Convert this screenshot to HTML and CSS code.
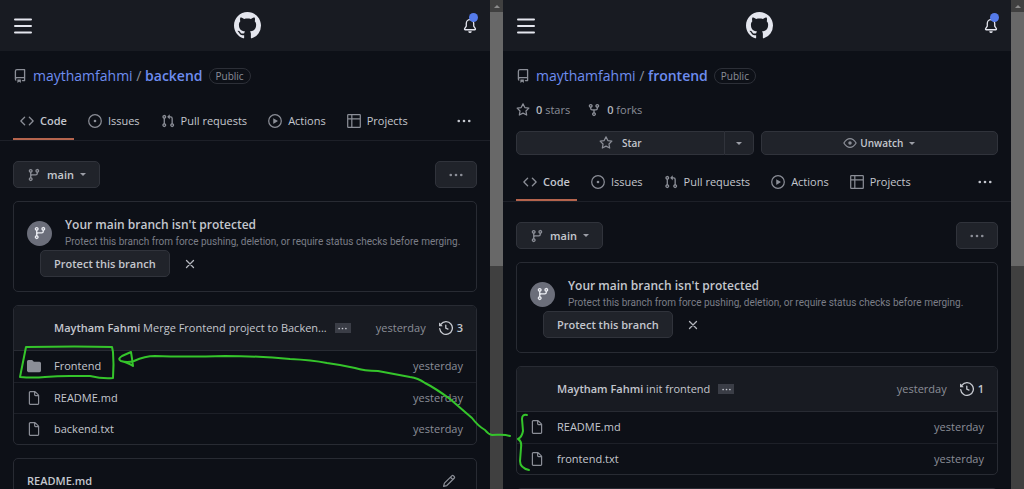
FILE: index.html
```
<!DOCTYPE html>
<html lang="en">
<head>
<meta charset="utf-8">
<meta name="viewport" content="width=device-width, initial-scale=1">
<title>maythamfahmi repositories</title>
<link rel="stylesheet" href="styles.css">
</head>
<body>
<svg class="sprite" aria-hidden="true">
  <symbol id="menu" viewBox="0 0 18 16"><path d="M1 1.5h16M1 8h16M1 14.5h16" fill="none" stroke="currentColor" stroke-width="2" stroke-linecap="round"/></symbol>
  <symbol id="github" viewBox="0 0 16 16"><path d="M8 0C3.58 0 0 3.58 0 8c0 3.54 2.29 6.53 5.47 7.59.4.07.55-.17.55-.38 0-.19-.01-.82-.01-1.49-2.01.37-2.53-.49-2.69-.94-.09-.23-.48-.94-.82-1.13-.28-.15-.68-.52-.01-.53.63-.01 1.08.58 1.23.82.72 1.21 1.87.87 2.33.66.07-.52.28-.87.51-1.07-1.78-.2-3.64-.89-3.64-3.95 0-.87.31-1.59.82-2.15-.08-.2-.36-1.02.08-2.12 0 0 .67-.21 2.2.82.64-.18 1.32-.27 2-.27.68 0 1.36.09 2 .27 1.53-1.04 2.2-.82 2.2-.82.44 1.1.16 1.92.08 2.12.51.56.82 1.27.82 2.15 0 3.07-1.87 3.75-3.65 3.95.29.25.54.73.54 1.48 0 1.07-.01 1.93-.01 2.2 0 .21.15.46.55.38A8.013 8.013 0 0016 8c0-4.42-3.58-8-8-8z"/></symbol>
  <symbol id="bell" viewBox="0 0 16 16"><path d="M8 16a2 2 0 001.985-1.75c.017-.137-.097-.25-.235-.25h-3.5c-.138 0-.252.113-.235.25A2 2 0 008 16z"/><path fill="none" stroke="currentColor" stroke-width="1.5" d="M3.75 5a4.25 4.25 0 018.5 0v3c0 .2.06.4.17.55l1.7 2.5a.76.76 0 01-.64 1.2H2.52a.76.76 0 01-.64-1.2l1.7-2.5A1 1 0 003.750 8z"/></symbol>
  <symbol id="repo" viewBox="0 0 16 16"><path fill-rule="evenodd" d="M2 2.500A2.500 2.500 0 014.500 0h8.750a.75.75 0 01.75.75v12.500a.75.75 0 01-.75.75h-2.500a.75.75 0 110-1.500h1.750v-2h-8a1 1 0 00-.714 1.700.75.75 0 01-1.072 1.050A2.495 2.495 0 012 11.500v-9zm10.500-1V9h-8c-.356 0-.694.074-1 .208V2.500a1 1 0 011-1h8zM5 12.250v3.250a.25.25 0 00.4.2l1.450-1.087a.25.25 0 01.3 0L8.600 15.700a.25.25 0 00.4-.2v-3.250a.25.25 0 00-.25-.25h-3.500a.25.25 0 00-.25.25z"/></symbol>
  <symbol id="code" viewBox="0 0 16 16"><path d="M4.720 3.220a.75.75 0 011.060 1.060L2.060 8l3.720 3.720a.75.75 0 11-1.060 1.060L.47 8.530a.75.75 0 010-1.060l4.250-4.250zm6.560 0a.75.75 0 10-1.060 1.060L13.940 8l-3.720 3.720a.75.75 0 101.060 1.060l4.250-4.250a.75.75 0 000-1.060l-4.250-4.250z"/></symbol>
  <symbol id="issue" viewBox="0 0 16 16"><circle cx="8" cy="8" r="7.2" fill="none" stroke="currentColor" stroke-width="1.400"/><circle cx="8" cy="8" r="1.500"/></symbol>
  <symbol id="pull" viewBox="0 0 16 16"><path fill-rule="evenodd" d="M7.177 3.073L9.573.677A.25.25 0 0110 .854v4.792a.25.25 0 01-.427.177L7.177 3.427a.25.25 0 010-.354zM3.750 2.500a.75.75 0 100 1.500.75.75 0 000-1.500zm-2.250.75a2.250 2.250 0 113 2.122v5.256a2.251 2.251 0 11-1.500 0V5.372A2.250 2.250 0 011.500 3.250zM11 2.500h-1V4h1a1 1 0 011 1v5.628a2.251 2.251 0 101.500 0V5A2.500 2.500 0 0011 2.500zm1 10.250a.75.75 0 111.500 0 .75.75 0 01-1.500 0zM3.750 12a.75.75 0 100 1.500.75.75 0 000-1.500z"/></symbol>
  <symbol id="play" viewBox="0 0 16 16"><circle cx="8" cy="8" r="7.2" fill="none" stroke="currentColor" stroke-width="1.400"/><path d="M6 5.200v5.600c0 .2.2.3.4.2l4.600-2.800c.2-.1.2-.3 0-.4L6.400 5c-.2-.1-.4 0-.4.2z"/></symbol>
  <symbol id="project" viewBox="0 0 16 16"><path d="M1.500.8h13q.7 0 .7.7v13q0 .7-.7.7h-13q-.7 0-.7-.7v-13q0-.7.7-.7zM5.500 1v14M1 5.500h14" fill="none" stroke="currentColor" stroke-width="1.400"/></symbol>
  <symbol id="dots" viewBox="0 0 16 16"><circle cx="2" cy="8" r="1.500"/><circle cx="8" cy="8" r="1.500"/><circle cx="14" cy="8" r="1.500"/></symbol>
  <symbol id="branch" viewBox="0 0 16 16"><path fill-rule="evenodd" d="M11.750 2.500a.75.75 0 100 1.500.75.75 0 000-1.500zm-2.250.75a2.250 2.250 0 113 2.122V6A2.500 2.500 0 0110 8.500H6a1 1 0 00-1 1v1.128a2.251 2.251 0 11-1.500 0V5.372a2.250 2.250 0 111.500 0v1.836A2.492 2.492 0 016 7h4a1 1 0 001-1v-.628A2.250 2.250 0 019.500 3.250zM4.250 12a.75.75 0 100 1.500.75.75 0 000-1.500zM3.500 3.250a.75.75 0 111.500 0 .75.75 0 01-1.500 0z"/></symbol>
  <symbol id="close" viewBox="0 0 16 16"><path d="M4 4l8 8M12 4l-8 8" fill="none" stroke="currentColor" stroke-width="1.500" stroke-linecap="round"/></symbol>
  <symbol id="history" viewBox="0 0 16 16"><path d="M1.643 3.143L.427 1.927A.25.25 0 000 2.104V5.750c0 .138.112.25.25.25h3.646a.25.25 0 00.177-.427L2.715 4.215a6.500 6.500 0 11-1.180 4.458.75.75 0 10-1.493.154 8.001 8.001 0 101.600-5.684zM7.750 4a.75.75 0 01.75.75v2.992l2.028.812a.75.75 0 01-.557 1.392l-2.500-1A.75.75 0 017 8.250v-3.500A.75.75 0 017.750 4z"/></symbol>
  <symbol id="file" viewBox="0 0 16 16"><path d="M3.750.75h5.100q.4 0 .7.3l3.400 3.400q.3.300.3.700v9.100q0 1-1 1h-8.500q-1 0-1-1V1.750q0-1 1-1zM8.750 1v3.250q0 1 1 1H13" fill="none" stroke="currentColor" stroke-width="1.400"/></symbol>
  <symbol id="folder" viewBox="0 0 16 16"><path d="M1.750 1A1.750 1.750 0 000 2.750v10.500C0 14.216.784 15 1.750 15h12.500A1.750 1.750 0 0016 13.250v-8.500A1.750 1.750 0 0014.250 3h-6.500a.25.25 0 01-.2-.1l-.9-1.200c-.33-.44-.85-.7-1.400-.7h-3.500z"/></symbol>
  <symbol id="pencil" viewBox="0 0 16 16"><path d="M1.800 14.200l1-3.700 8.400-8.400q1-1 2 0l.7.700q1 1 0 2L5.500 13.200zM9.700 3.700l2.600 2.600" fill="none" stroke="currentColor" stroke-width="1.400" stroke-linejoin="round"/></symbol>
  <symbol id="star" viewBox="0 0 16 16"><path d="M8 1l2.100 4.200 4.600.7-3.300 3.300.8 4.600L8 11.600l-4.200 2.200.8-4.600L1.300 5.900l4.600-.7z" fill="none" stroke="currentColor" stroke-width="1.400" stroke-linejoin="round"/></symbol>
  <symbol id="fork" viewBox="0 0 16 16"><path fill-rule="evenodd" d="M5 3.250a.75.75 0 11-1.500 0 .75.75 0 011.500 0zm0 2.122a2.250 2.250 0 10-1.500 0v.878A2.250 2.250 0 005.750 8.500h1.500v2.128a2.251 2.251 0 101.500 0V8.500h1.500a2.250 2.250 0 002.250-2.250v-.878a2.250 2.250 0 10-1.500 0v.878a.75.75 0 01-.75.75h-4.500A.75.75 0 015 6.250v-.878zm3.750 7.378a.75.75 0 11-1.500 0 .75.75 0 011.500 0zm3-8.750a.75.75 0 100-1.500.75.75 0 000 1.500z"/></symbol>
  <symbol id="eye" viewBox="0 0 16 16"><path d="M1 8q3-5 7-5t7 5q-3 5-7 5T1 8z" fill="none" stroke="currentColor" stroke-width="1.400" stroke-linejoin="round"/><circle cx="8" cy="8" r="2"/></symbol>
</svg>

<div class="screens">
  <section class="window window-backend" aria-label="backend repository">
    <div class="page">
      <header class="topbar">
        <button class="plain" aria-label="Menu"><svg class="icon-menu"><use href="#menu"/></svg></button>
        <a class="logo" href="#" aria-label="GitHub"><svg class="icon-logo"><use href="#github"/></svg></a>
        <button class="plain bell" aria-label="Notifications"><svg class="icon-bell"><use href="#bell"/></svg><span class="unread"></span></button>
      </header>
      <div class="repo-title">
        <svg class="icon"><use href="#repo"/></svg>
        <h1><a href="#">maythamfahmi</a> <span class="slash">/</span> <a class="repo-name" href="#">backend</a></h1>
        <span class="badge">Public</span>
      </div>
      <nav class="tabs">
        <a class="tab current" href="#"><svg class="icon"><use href="#code"/></svg>Code</a>
        <a class="tab" href="#"><svg class="icon"><use href="#issue"/></svg>Issues</a>
        <a class="tab" href="#"><svg class="icon"><use href="#pull"/></svg>Pull requests</a>
        <a class="tab" href="#"><svg class="icon"><use href="#play"/></svg>Actions</a>
        <a class="tab" href="#"><svg class="icon"><use href="#project"/></svg>Projects</a>
        <button class="plain more" aria-label="More"><svg class="icon"><use href="#dots"/></svg></button>
      </nav>
      <main class="content">
        <div class="toolbar">
          <button class="btn branch"><svg class="icon"><use href="#branch"/></svg>main<span class="caret"></span></button>
          <button class="btn options" aria-label="Options"><svg class="icon"><use href="#dots"/></svg></button>
        </div>
        <section class="box protect">
          <div class="notice">
            <span class="disc"><svg class="icon"><use href="#branch"/></svg></span>
            <div><h2>Your main branch isn't protected</h2><p>Protect this branch from force pushing, deletion, or require status checks before merging.</p></div>
          </div>
          <div class="notice-actions"><button class="btn">Protect this branch</button><button class="plain dismiss" aria-label="Dismiss"><svg class="icon"><use href="#close"/></svg></button></div>
        </section>
        <section class="box files">
          <div class="commit">
            <p><b>Maytham Fahmi</b> Merge Frontend project to Backen...</p>
            <button class="ellipsis" aria-label="Show message"><svg><use href="#dots"/></svg></button>
            <span class="when">yesterday</span>
            <a class="history" href="#"><svg class="icon"><use href="#history"/></svg>3</a>
          </div>
          <table>
            <tr><td class="kind"><svg class="icon"><use href="#folder"/></svg></td><td><a href="#">Frontend</a></td><td class="date">yesterday</td></tr>
            <tr><td class="kind"><svg class="icon"><use href="#file"/></svg></td><td><a href="#">README.md</a></td><td class="date">yesterday</td></tr>
            <tr><td class="kind"><svg class="icon"><use href="#file"/></svg></td><td><a href="#">backend.txt</a></td><td class="date">yesterday</td></tr>
          </table>
        </section>
        <section class="box readme"><h2>README.md</h2><button class="plain" aria-label="Edit"><svg class="icon"><use href="#pencil"/></svg></button></section>
      </main>
    </div>
    <div class="scrollbar" aria-hidden="true"><span class="arrow"></span><span class="thumb"></span></div>
  </section>

  <section class="window window-frontend" aria-label="frontend repository">
    <div class="page">
      <header class="topbar">
        <button class="plain" aria-label="Menu"><svg class="icon-menu"><use href="#menu"/></svg></button>
        <a class="logo" href="#" aria-label="GitHub"><svg class="icon-logo"><use href="#github"/></svg></a>
        <button class="plain bell" aria-label="Notifications"><svg class="icon-bell"><use href="#bell"/></svg><span class="unread"></span></button>
      </header>
      <div class="repo-title">
        <svg class="icon"><use href="#repo"/></svg>
        <h1><a href="#">maythamfahmi</a> <span class="slash">/</span> <a class="repo-name" href="#">frontend</a></h1>
        <span class="badge">Public</span>
      </div>
      <div class="stats">
        <a href="#"><svg class="icon"><use href="#star"/></svg><span><b>0</b> stars</span></a>
        <a href="#"><svg class="icon"><use href="#fork"/></svg><span><b>0</b> forks</span></a>
      </div>
      <div class="social">
        <div class="split"><button class="btn small"><svg class="icon"><use href="#star"/></svg>Star</button><button class="btn small drop" aria-label="Lists"><span class="caret"></span></button></div>
        <button class="btn small"><svg class="icon"><use href="#eye"/></svg>Unwatch<span class="caret"></span></button>
      </div>
      <nav class="tabs">
        <a class="tab current" href="#"><svg class="icon"><use href="#code"/></svg>Code</a>
        <a class="tab" href="#"><svg class="icon"><use href="#issue"/></svg>Issues</a>
        <a class="tab" href="#"><svg class="icon"><use href="#pull"/></svg>Pull requests</a>
        <a class="tab" href="#"><svg class="icon"><use href="#play"/></svg>Actions</a>
        <a class="tab" href="#"><svg class="icon"><use href="#project"/></svg>Projects</a>
        <button class="plain more" aria-label="More"><svg class="icon"><use href="#dots"/></svg></button>
      </nav>
      <main class="content">
        <div class="toolbar">
          <button class="btn branch"><svg class="icon"><use href="#branch"/></svg>main<span class="caret"></span></button>
          <button class="btn options" aria-label="Options"><svg class="icon"><use href="#dots"/></svg></button>
        </div>
        <section class="box protect">
          <div class="notice">
            <span class="disc"><svg class="icon"><use href="#branch"/></svg></span>
            <div><h2>Your main branch isn't protected</h2><p>Protect this branch from force pushing, deletion, or require status checks before merging.</p></div>
          </div>
          <div class="notice-actions"><button class="btn">Protect this branch</button><button class="plain dismiss" aria-label="Dismiss"><svg class="icon"><use href="#close"/></svg></button></div>
        </section>
        <section class="box files">
          <div class="commit">
            <p><b>Maytham Fahmi</b> init frontend</p>
            <button class="ellipsis" aria-label="Show message"><svg><use href="#dots"/></svg></button>
            <span class="when">yesterday</span>
            <a class="history" href="#"><svg class="icon"><use href="#history"/></svg>1</a>
          </div>
          <table>
            <tr><td class="kind"><svg class="icon"><use href="#file"/></svg></td><td><a href="#">README.md</a></td><td class="date">yesterday</td></tr>
            <tr><td class="kind"><svg class="icon"><use href="#file"/></svg></td><td><a href="#">frontend.txt</a></td><td class="date">yesterday</td></tr>
          </table>
        </section>
        <section class="box readme"></section>
      </main>
    </div>
    <div class="scrollbar" aria-hidden="true"><span class="arrow"></span><span class="thumb"></span></div>
  </section>

  <svg class="annotation" viewBox="0 0 1024 489" preserveAspectRatio="none" aria-hidden="true">
    <path d="M26 347Q24 357 20 377Q33 378 45 377T70 376T90 376Q103 379 113 378Q114 364 113 352L112 347Q80 346 26 347Z"/>
    <path d="M510 436C504 434 499 435 492 435Q488 434 485 430Q478 426 472 418L450 399Q435 388 425 383Q418 378 410 377L378 371Q364 371 355 368Q342 365 327 363Q312 360 290 359Q260 356 225 356Q185 357 155 356Q145 356 134 361Q127 363 121 361Q117 359 122 356L131 352Q132 358 133 366Q129 363 121 361"/>
    <path d="M527 415Q522 414 522 419L523 431Q522 437 518 439Q522 441 521 448L520 461Q520 468 529 470"/>
  </svg>
</div>
</body>
</html>
```
FILE: styles.css
```
* { box-sizing: border-box; }

body {
  margin: 0;
  background: #0d1017;
  color: #c4c7ce;
  font: 11px/20px "Open Sans", "Noto Sans", sans-serif;
}

h1, h2, p { margin: 0; }
a { color: inherit; text-decoration: none; }
button { font: inherit; color: inherit; cursor: pointer; }
b { font-weight: 600; }
svg { fill: currentColor; flex: none; display: block; }

.sprite { position: absolute; width: 0; height: 0; }
.icon { width: 14px; height: 14px; color: #8b8e97; }

.screens {
  position: relative;
  display: flex;
  height: 100vh;
  overflow: hidden;
}

.window { display: flex; min-width: 0; }
.window-backend { flex: 503; }
.window-frontend { flex: 521; }
.page { flex: 1; min-width: 0; overflow: hidden; }

.plain {
  display: flex;
  padding: 0;
  border: 0;
  background: none;
}

/* Top bar */
.topbar {
  display: flex;
  align-items: center;
  justify-content: space-between;
  height: 51px;
  padding: 0 13px 0 14px;
  background: #181b22;
  color: #e4e6ee;
}
.icon-menu { width: 18px; height: 16px; }
.icon-logo { width: 27px; height: 27px; }
.icon-bell { width: 14px; height: 14px; }
.bell { position: relative; }
.unread {
  position: absolute;
  top: -6px;
  right: -1px;
  width: 9px;
  height: 9px;
  border-radius: 50%;
  background: #557bea;
}

/* Repository heading */
.repo-title {
  display: flex;
  align-items: center;
  gap: 6px;
  height: 50px;
  padding: 0 13px;
}
.repo-title h1 {
  color: #6d8df0;
  font-size: 14px;
  font-weight: 400;
}
.slash { color: #8b8e97; }
.repo-name { font-weight: 600; }
.badge {
  padding: 0 6px;
  border: 1px solid #2c2f37;
  border-radius: 10px;
  color: #8b8e97;
  font-size: 10px;
  line-height: 14px;
}

.stats { display: flex; gap: 17px; padding: 0 13px; color: #8b8e97; }
.stats a { display: flex; align-items: center; gap: 6px; line-height: 18px; }
.stats b { color: #b4b7be; }

.social { display: grid; grid-template-columns: 1fr 1fr; gap: 7px; padding: 12px 13px 0; }
.split { display: flex; }
.split .btn { flex: 1; border-radius: 5px 0 0 5px; }
.split .drop { flex: none; width: 29px; padding: 0; border-left: 0; border-radius: 0 5px 5px 0; }
.split .icon { margin-right: 6px; }

/* Tabs */
.tabs {
  display: flex;
  gap: 7px;
  height: 40px;
  padding: 0 13px;
  border-bottom: 1px solid #1d2028;
}
.window-frontend .tabs { height: 47px; padding-top: 7px; }
.tab {
  display: flex;
  align-items: center;
  gap: 6px;
  padding: 2px 7px 0;
  border-bottom: 2px solid transparent;
  white-space: nowrap;
}
.current { font-weight: 600; border-bottom-color: #b5644d; }
.more { align-items: center; margin-left: auto; padding: 0 6px; }
.more .icon { color: #c4c7ce; }

/* Buttons */
.btn {
  display: flex;
  align-items: center;
  justify-content: center;
  gap: 6px;
  height: 27px;
  padding: 0 13px;
  border: 1px solid #30333b;
  border-radius: 5px;
  background: #20232a;
  font-weight: 600;
}
.small { height: 24px; font-size: 10px; gap: 3px; }
.caret {
  border: 3px solid transparent;
  border-top-color: #9b9ea6;
  border-bottom: 0;
}
.small .caret { margin-left: 3px; }
.drop .caret { margin: 0; }

.content { padding: 20px 13px 0; }
.toolbar { display: flex; justify-content: space-between; }

.box {
  margin-top: 13px;
  border: 1px solid #282b33;
  border-radius: 5px;
}

/* Branch protection notice */
.protect { height: 91px; padding: 14px 13px 0; }
.notice { display: flex; align-items: center; gap: 13px; height: 34px; }
.disc {
  display: grid;
  flex: none;
  place-items: center;
  width: 25px;
  height: 25px;
  border-radius: 50%;
  background: #6b6e7a;
}
.disc .icon { color: #eceef4; }
.notice h2 { font-size: 12px; line-height: 18px; font-weight: 600; }
.notice p { color: #7b7e87; font-family: Roboto, sans-serif; font-size: 10px; line-height: 16px; white-space: nowrap; }
.notice-actions { display: flex; align-items: center; gap: 13px; padding-left: 13px; }
.dismiss .icon { color: #b4b7be; }

/* File list */
.files { overflow: hidden; }
.commit {
  display: flex;
  align-items: center;
  height: 45px;
  padding: 0 13px 0 40px;
  border-bottom: 1px solid #282b33;
  background: #181b22;
}
.commit p { white-space: nowrap; }
.ellipsis {
  display: grid;
  place-items: center;
  width: 16px;
  height: 10px;
  margin-left: 8px;
  padding: 0;
  border: 0;
  background: #3a3d46;
}
.ellipsis svg { width: 9px; height: 9px; }
.when { margin-left: auto; color: #8b8e97; }
.history { display: flex; align-items: center; gap: 4px; margin-left: 13px; font-weight: 600; }
.history .icon { color: #c4c7ce; }

table { width: 100%; border-collapse: collapse; }
td { height: 31px; padding: 0; }
tr + tr td { border-top: 1px solid #1d2028; }
.kind { width: 40px; padding-left: 13px; }
.date { padding-right: 13px; text-align: right; color: #8b8e97; }

.readme { display: flex; align-items: center; justify-content: space-between; height: 46px; padding: 0 20px 0 13px; }
.readme h2 { font-size: 11px; font-weight: 600; }

/* Scrollbars */
.scrollbar {
  display: flex;
  flex-direction: column;
  width: 13px;
  background: #404040;
}
.arrow { height: 12px; display: grid; place-items: center; }
.arrow::before { content: ""; border: 3px solid transparent; border-top: 0; border-bottom-color: #8c8c8c; }
.thumb { height: 52%; background: #686868; }

/* Hand-drawn arrow over both windows */
.annotation {
  position: absolute;
  inset: 0;
  width: 100%;
  height: 100%;
  pointer-events: none;
  fill: none;
  stroke: #35c52b;
  stroke-width: 2;
  stroke-linecap: round;
  stroke-linejoin: round;
}
```
